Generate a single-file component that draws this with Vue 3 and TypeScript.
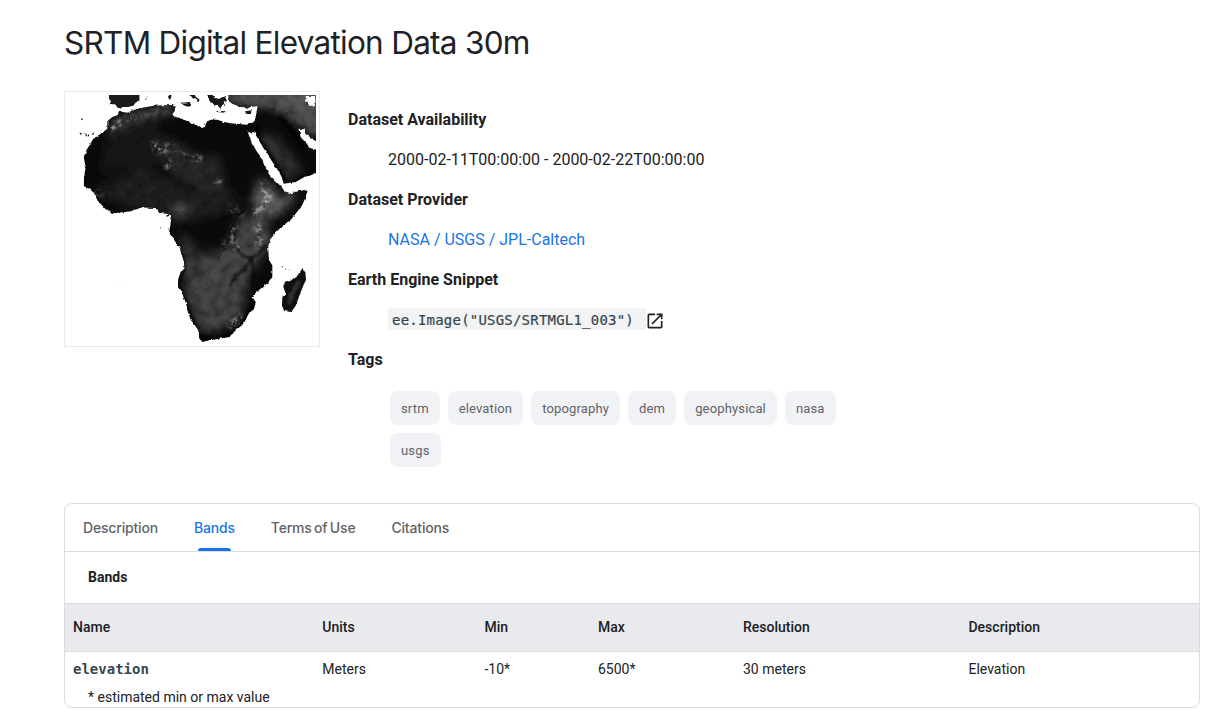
<script setup lang="ts">
interface Band {
  name: string
  units: string
  min: string
  max: string
  resolution: string
  description: string
}

const tags: string[] = ['srtm', 'elevation', 'topography', 'dem', 'geophysical', 'nasa', 'usgs']
const tabs: string[] = ['Description', 'Bands', 'Terms of Use', 'Citations']
const activeTab = 'Bands'
const columns: string[] = ['Name', 'Units', 'Min', 'Max', 'Resolution', 'Description']
const bands: Band[] = [
  { name: 'elevation', units: 'Meters', min: '-10*', max: '6500*', resolution: '30 meters', description: 'Elevation' },
]
</script>

<template>
  <main class="page">
    <h1 class="title">SRTM Digital Elevation Data 30m</h1>

    <section class="summary">
      <div class="thumb">
        <svg class="map" viewBox="24 21 744 744" aria-label="Elevation map of Africa">
          <defs>
            <filter id="rough" x="0" y="0" width="800" height="800" filterUnits="userSpaceOnUse" color-interpolation-filters="sRGB">
              <feTurbulence type="fractalNoise" baseFrequency="0.07" numOctaves="2" seed="4" />
              <feDisplacementMap in="SourceGraphic" scale="9" xChannelSelector="R" yChannelSelector="G" />
            </filter>
            <filter id="terrain" x="0" y="0" width="800" height="800" filterUnits="userSpaceOnUse" color-interpolation-filters="sRGB">
              <feGaussianBlur in="SourceGraphic" stdDeviation="15" result="soft" />
              <feTurbulence type="fractalNoise" baseFrequency="0.035" numOctaves="4" seed="9" />
              <feColorMatrix values="0 0 0 0 1  0 0 0 0 1  0 0 0 0 1  1 0 0 0 0.35" result="mask" />
              <feComposite in="soft" in2="mask" operator="in" />
            </filter>
            <filter id="speckle" x="0" y="0" width="800" height="800" filterUnits="userSpaceOnUse" color-interpolation-filters="sRGB">
              <feTurbulence type="fractalNoise" baseFrequency="0.07" numOctaves="4" seed="21" result="n" />
              <feColorMatrix in="n" values="0 0 0 0 1  0 0 0 0 1  0 0 0 0 1  4 0 0 0 -1.7" result="mask" />
              <feGaussianBlur in="SourceGraphic" stdDeviation="6" />
              <feComposite in2="mask" operator="in" />
            </filter>
            <filter id="blur3" x="0" y="0" width="800" height="800" filterUnits="userSpaceOnUse">
              <feGaussianBlur stdDeviation="2.5" />
            </filter>
            <clipPath id="land">
              <path d="M183 66 190 70 205 72 225 64 250 57 280 52 310 50 340 49 349 55 347 68 340 76 343 82 357 87 372 92 390 98 395 103 412 108 425 118 438 115 441 100 455 93 475 93 495 100 515 104 540 106 562 108 578 105 587 96 592 75 596 52 575 55 560 60 540 53 520 45 510 38 507 10H790V302H747L742 320 731 347 714 370 695 394 670 412 652 430 635 450 628 470 628 490 630 515 640 530 640 565 630 580 610 595 590 612 580 625 590 640 585 662 570 672 562 690 550 708 530 725 510 745 480 750 450 755 430 760 422 750 420 738 418 725 405 705 396 695 388 675 382 645 370 615 357 595 357 575 365 550 377 540 375 520 365 485 350 460 330 432 335 405 338 385 325 375 300 372 290 358 250 356 215 368 165 374 140 362 115 335 105 312 90 300 74 292 75 265 80 235 74 205 85 180 103 150 130 132 145 120 145 98 160 85 175 80Z" />
            </clipPath>
          </defs>

          <rect x="24" y="21" width="744" height="744" fill="#fff" />
          <g filter="url(#rough)">
            <g transform="translate(-3 2)">
              <!-- Iberia and the Mediterranean islands -->
              <path fill="#1b1b1b" d="M150 10H242L241 36 229 43 223 51 206 55 190 55 184 60 176 57 168 47 152 47 156 38 150 30Z" />
              <path fill="#181818" d="M324 10H337V29L330 33ZM365 42 394 40 392 54 378 52ZM387 10H404L410 24 422 33 418 41 401 29ZM437 10H458L466 26 479 31 497 22 504 36 494 42 500 54 490 49 484 60 475 48 464 51 452 34ZM472 66 500 68 498 72 474 70ZM558 68 579 65 573 74 561 75ZM258 28 267 27 264 31Z" />
              <circle cx="72" cy="92" r="2.5" /><circle cx="65" cy="135" r="2.5" /><path d="M73 136 82 141 80 144ZM86 140 91 136 89 144ZM98 137 106 130 103 138Z" />

              <!-- Africa, Levant, Arabia and Iran -->
              <g clip-path="url(#land)">
                <rect x="20" y="5" width="780" height="765" fill="#0a0a0a" />
                <g filter="url(#blur3)">
                  <g filter="url(#terrain)">
                    <path fill="#494949" d="M390 525 440 490 500 490 520 440 545 390 620 380 640 460 600 520 570 560 560 620 545 680 500 720 430 730 400 680 380 610Z" />
                    <path fill="#3c3c3c" d="M370 430 410 480 430 560 360 560Z" />
                    <path fill="#6a6a6a" d="M580 340 600 270 640 290 650 320 720 315 670 370 600 400Z" />
                    <path fill="#5a5a5a" d="M505 -10H799V160L730 115 680 80 630 54 560 55 510 38Z" />
                    <path fill="#343434" d="M590 150 640 130 730 240 680 280 650 240Z" />
                    <path fill="#505050" d="M140 120 200 80 340 50 345 75 240 95 150 135Z" />
                    <path fill="#292929" d="M260 140 340 150 410 200 480 200 500 300 430 310 330 250Z" />
                    <path fill="#202020" d="M100 310 250 230 400 310 500 300 560 350 400 400 230 365Z" />
                    <path fill="#191919" d="M150 130 300 90 290 230 120 250Z" />
                    <path fill="#484848" d="M335 345 395 340 390 380 350 395Z" />
                  </g>
                </g>
                <g filter="url(#speckle)" fill="none">
                  <path stroke="#aaa" stroke-width="15" d="M612 280 620 310 607 340M640 320 620 345 585 375M145 122 195 96M530 405 522 450 543 490M590 400 604 440 595 474M284 160 300 190 340 170M325 210 330 242M395 202 428 212M475 292 485 275M510 715 530 700 545 680" />
                  <path stroke="#4a4a4a" stroke-width="22" d="M510 24 580 32 670 55 765 120M345 350 385 375M510 360 560 380M340 170 400 210M95 305 130 325M195 96 330 60M400 640 470 560M500 450 490 530" />
                </g>
                <g filter="url(#blur3)" fill="none" stroke="#050505" stroke-width="6" stroke-opacity="0.8">
                  <path d="M534 400 526 440 533 475 548 499 570 507 594 500 620 470M576 508 560 540 535 555 510 595M576 510 582 540 586 570M580 560 582 610" />
                  <path stroke-width="13" d="M590 110 600 155 640 210 680 275M660 85 690 115 735 180M418 745 480 752 535 728 570 680 585 620 640 575" />
                  <path stroke-width="7" d="M768 238 710 280M357 595 385 650 420 740M330 432 370 500 377 540 357 580" />
                </g>
              </g>

              <!-- Red Sea, gulfs and the Indian Ocean -->
              <g fill="#fff">
                <path d="M564 122 573 133 581 130 585 134 587 126 589 137 599 154 613 177 623 194 637 215 652 237 667 263 674 285 710 280 735 266 752 261 795 244V310H747V302L718 308 695 314 677 308 670 298 651 278 631 258 616 230 606 206 593 188 579 163 571 144Z" />
                <path d="M718 120 736 122 743 137 755 143 763 153 795 170V187L755 179 741 163 725 145Z" />
                <path d="M741 22H769V51H749V39H738Z" />
              </g>
              <!-- Madagascar and Comoros -->
              <path fill="#101010" d="M731 538 739 552 741 574 734 588 724 613 710 652 696 670 675 667 669 648 670 625 680 615 673 595 678 579 698 573 716 560Z" />
              <path fill="#333" filter="url(#blur3)" d="M715 574 725 580 706 620 693 648 684 641 692 614Z" />
              <path fill="#444" d="M668 532 672 532 670 537ZM678 539 682 541 680 544ZM690 543 693 543 692 546Z" />
              <circle cx="305" cy="417" r="1.5" /><circle cx="181" cy="577" r="1.5" fill="#ddd" /><circle cx="325" cy="382" r="3" />
            </g>
          </g>
        </svg>
      </div>

      <dl class="facts">
        <dt>Dataset Availability</dt>
        <dd>2000-02-11T00:00:00 - 2000-02-22T00:00:00</dd>
        <dt>Dataset Provider</dt>
        <dd><a class="link">NASA / USGS / JPL-Caltech</a></dd>
        <dt>Earth Engine Snippet</dt>
        <dd class="snippet">
          <code>ee.Image("USGS/SRTMGL1_003")</code>
          <svg class="open" viewBox="0 0 24 24" aria-hidden="true">
            <path d="M19 19H5V5h7V3H5a2 2 0 0 0-2 2v14a2 2 0 0 0 2 2h14c1.1 0 2-.9 2-2v-7h-2v7zM14 3v2h3.59l-9.83 9.83 1.41 1.41L19 6.41V10h2V3h-7z" />
          </svg>
        </dd>
        <dt>Tags</dt>
        <dd class="tags">
          <span v-for="tag in tags" :key="tag" class="tag">{{ tag }}</span>
        </dd>
      </dl>
    </section>

    <section class="card">
      <nav class="tabs">
        <a v-for="tab in tabs" :key="tab" class="tab" :class="{ active: tab === activeTab }">{{ tab }}</a>
      </nav>
      <h2 class="heading">Bands</h2>
      <div class="row head">
        <span v-for="column in columns" :key="column">{{ column }}</span>
      </div>
      <div v-for="band in bands" :key="band.name" class="row">
        <code>{{ band.name }}</code>
        <span>{{ band.units }}</span>
        <span>{{ band.min }}</span>
        <span>{{ band.max }}</span>
        <span>{{ band.resolution }}</span>
        <span>{{ band.description }}</span>
      </div>
      <p class="note">* estimated min or max value</p>
    </section>
  </main>
</template>

<style>
body {
  background: #fff;
}
</style>

<style scoped>
.page {
  box-sizing: border-box;
  width: 1210px;
  height: 717px;
  padding: 23px 10px 0 64px;
  overflow: hidden;
  color: #202124;
  font: 16px/24px Roboto, sans-serif;
}
.title {
  margin: 0;
  font: 400 31.5px/40px Inter, sans-serif;
  letter-spacing: -0.73px;
  white-space: nowrap;
}
.summary {
  display: flex;
  gap: 28px;
  height: 412px;
  margin-top: 28px;
}
.thumb {
  box-sizing: border-box;
  width: 256px;
  height: 256px;
  padding: 3px;
  border: 1px solid #e8eaed;
}
.map {
  display: block;
  width: 248px;
  height: 248px;
}
.facts {
  width: 500px;
  margin: 17px 0 0;
}
dt {
  margin-bottom: 16px;
  font-weight: 700;
}
dd {
  margin: 0 0 16px 40px;
}
.link {
  color: #1a73e8;
}
.snippet {
  display: flex;
  align-items: center;
  height: 24px;
}
.snippet code {
  box-sizing: border-box;
  width: 258px;
  height: 22px;
  padding: 0 4px;
  margin-top: -2px;
  background: #f1f3f4;
  color: #37474f;
  font: 14px/24px "DejaVu Sans Mono", monospace;
  letter-spacing: 0.212px;
  -webkit-text-stroke: 0.2px #37474f;
}
.open {
  width: 20px;
  height: 20px;
  margin: 1px 0 0 -1px;
  fill: #202124;
}
.tags {
  display: flex;
  flex-wrap: wrap;
  gap: 8px;
  margin: 19px 0 0 42px;
}
.tag {
  height: 34px;
  padding: 0 11px;
  border-radius: 8px;
  background: #f1f2f6;
  color: #5f6368;
  font-size: 13px;
  line-height: 35px;
  letter-spacing: 0.15px;
}
.card {
  box-sizing: border-box;
  width: 1136px;
  height: 205px;
  border: 1px solid #dadce0;
  border-radius: 8px;
  font-size: 14px;
  overflow: hidden;
}
.tabs {
  display: flex;
  gap: 36px;
  height: 47px;
  padding-left: 18px;
  border-bottom: 1px solid #dadce0;
}
.tab {
  position: relative;
  color: #5f6368;
  font: 500 14px/48px Inter, sans-serif;
  letter-spacing: -0.18px;
  word-spacing: -1.2px;
}
.active {
  color: #1a73e8;
}
.active::after {
  content: "";
  position: absolute;
  right: 4px;
  bottom: 0;
  left: 4px;
  height: 3px;
  border-radius: 3px 3px 0 0;
  background: #1a73e8;
}
.heading {
  height: 51px;
  margin: 0 0 0 23px;
  font-size: 14px;
  font-weight: 700;
  line-height: 51px;
}
.row {
  display: grid;
  grid-template-columns: 249.3px 162.2px 113.5px 145px 225.5px 1fr;
  height: 34px;
  padding-left: 8px;
  line-height: 34px;
}
.head {
  height: 47px;
  border-top: 1px solid #dadce0;
  border-bottom: 1px solid #dadce0;
  background: #e8eaed;
  font-weight: 500;
  line-height: 46px;
}
.row code {
  color: #37474f;
  font: 700 14px/34px "DejaVu Sans Mono", monospace;
}
.note {
  margin: 0 0 0 23px;
  line-height: 22px;
}
</style>
